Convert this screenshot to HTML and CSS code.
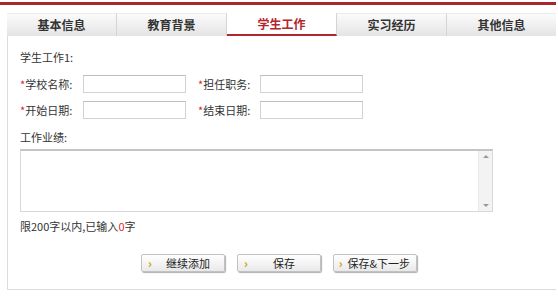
FILE: index.html
```html
<!DOCTYPE html>
<html lang="zh">
<head>
<meta charset="utf-8">
<link rel="stylesheet" href="styles.css">
</head>
<body>
<div class="page">
  <div class="topbar"></div>
  <div class="tabs">
    <div class="tab">基本信息</div>
    <div class="tab">教育背景</div>
    <div class="tab active">学生工作</div>
    <div class="tab">实习经历</div>
    <div class="tab last">其他信息</div>
  </div>
  <div class="panel">
    <div class="title">学生工作1:</div>
    <div class="row">
      <label class="lbl"><span class="req">*</span>学校名称:</label>
      <div class="inp"></div>
      <label class="lbl lbl2"><span class="req">*</span>担任职务:</label>
      <div class="inp"></div>
    </div>
    <div class="row row2">
      <label class="lbl"><span class="req">*</span>开始日期:</label>
      <div class="inp"></div>
      <label class="lbl lbl2"><span class="req">*</span>结束日期:</label>
      <div class="inp"></div>
    </div>
    <div class="title2">工作业绩:</div>
    <div class="textarea">
      <div class="ta-body"></div>
      <div class="scroll">
        <span class="arr up"></span>
        <span class="arr down"></span>
      </div>
    </div>
    <div class="hint">限200字以内,已输入<span class="red">0</span>字</div>
    <div class="buttons">
      <div class="btn"><span class="chev">›</span><span class="btxt">继续添加</span></div>
      <div class="btn"><span class="chev">›</span><span class="btxt">保存</span></div>
      <div class="btn"><span class="chev">›</span><span class="btxt">保存&amp;下一步</span></div>
    </div>
  </div>
</div>
</body>
</html>
```

FILE: styles.css
```css
html, body {
  margin: 0;
  padding: 0;
  background: #fff;
}
body {
  font-family: "Noto Sans CJK SC", "Liberation Sans", sans-serif;
  font-size: 11px;
  color: #333;
}
.page {
  width: 558px;
  height: 298px;
  padding-top: 2px;
  box-sizing: border-box;
}
.topbar {
  width: 556px;
  height: 3px;
  background: #a9262c;
}
.tabs {
  display: flex;
  margin-top: 8px;
  margin-left: 7px;
  width: 549px;
  height: 23px;
}
.tab {
  width: 110px;
  height: 23px;
  box-sizing: border-box;
  background: linear-gradient(#fbfbfb, #e4e4e4);
  border-right: 1px solid #d4d4d4;
  border-top: 1px solid #ececec;
  text-align: center;
  line-height: 21px;
  font-size: 12px;
  font-weight: bold;
  color: #333;
  white-space: nowrap;
}
.tab.last {
  width: 109px;
  border-right: none;
}
.tab.active {
  background: #fff;
  color: #b3262d;
  border-bottom: 2px solid #b3262d;
  border-top: none;
  line-height: 21px;
}
.panel {
  margin-left: 7px;
  width: 549px;
  height: 254px;
  box-sizing: border-box;
  border-left: 1px solid #dcdcdc;
  border-bottom: 1px solid #dcdcdc;
  padding-left: 12px;
  padding-top: 13px;
}
.title {
  height: 16px;
  line-height: 16px;
}
.row {
  display: flex;
  align-items: center;
  margin-top: 10px;
  height: 18px;
  line-height: 18px;
}
.row2 {
  margin-top: 8px;
}
.lbl {
  width: 63px;
  white-space: nowrap;
}
.lbl2 {
  width: 62px;
  margin-left: 12px;
}
.req {
  color: #d0262d;
}
.inp {
  width: 103px;
  height: 18px;
  box-sizing: border-box;
  border: 1px solid #d2d2d2;
  border-top-color: #bdbdbd;
  background: #fff;
}
.title2 {
  margin-top: 10px;
  height: 16px;
  line-height: 16px;
}
.textarea {
  display: flex;
  margin-top: 4px;
  width: 473px;
  height: 63px;
  box-sizing: border-box;
  border: 1px solid #d8d8d8;
  border-top: 2px solid #c4c4c4;
}
.ta-body {
  flex: 1;
}
.scroll {
  width: 13px;
  background: #f3f3f3;
  border-left: 1px solid #e8e8e8;
  display: flex;
  flex-direction: column;
  justify-content: space-between;
  align-items: center;
  padding: 4px 0;
}
.arr {
  width: 0;
  height: 0;
  border-left: 3px solid transparent;
  border-right: 3px solid transparent;
}
.arr.up {
  border-bottom: 3px solid #999;
}
.arr.down {
  border-top: 3px solid #999;
}
.hint {
  margin-top: 6px;
  height: 16px;
  line-height: 16px;
  white-space: nowrap;
}
.red {
  color: #e02a2a;
}
.buttons {
  display: flex;
  margin-top: 20px;
  margin-left: 121px;
  gap: 12px;
}
.btn {
  width: 84px;
  height: 18px;
  box-sizing: border-box;
  border: 1px solid #c2c2c2;
  border-radius: 2px;
  background: linear-gradient(#ffffff, #e9e9e9);
  box-shadow: 1px 1px 1px #b0b0b0;
  display: flex;
  align-items: center;
  color: #222;
  white-space: nowrap;
}
.chev {
  width: 16px;
  text-align: center;
  color: #c8a400;
  font-weight: bold;
  font-size: 12px;
  line-height: 16px;
}
.btxt {
  flex: 1;
  text-align: center;
  padding-right: 6px;
  line-height: 16px;
}
```
